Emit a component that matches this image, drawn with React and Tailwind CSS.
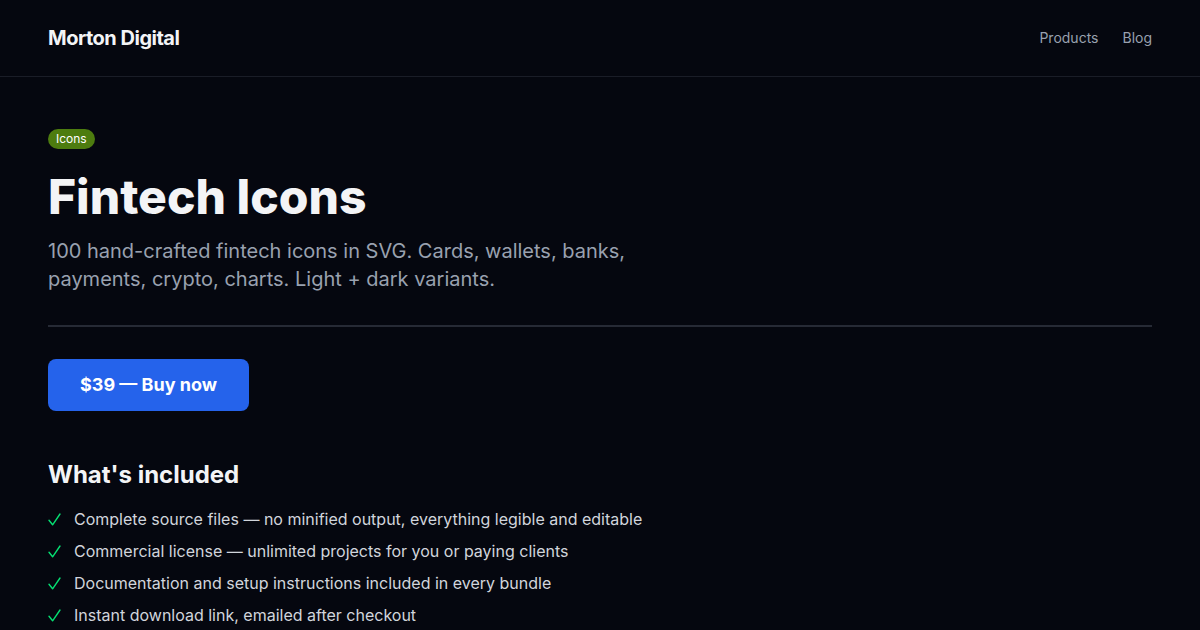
import React from 'react';

const items = [
    'Complete source files — no minified output, everything legible and editable',
    'Commercial license — unlimited projects for you or paying clients',
    'Documentation and setup instructions included in every bundle',
    'Instant download link, emailed after checkout',
];

const Check = () => (
    <svg className="w-[13px] h-[13px] text-green-400" viewBox="0 0 13 13" fill="none" stroke="currentColor" strokeWidth="1.4" strokeLinecap="round" strokeLinejoin="round">
        <path d="M1 7.2L4.6 11.8L12 1" />
    </svg>
);

const App = () => {
    return (
        <div className="min-h-screen bg-[#05070f] text-gray-100 font-['Inter','Liberation_Sans',sans-serif]">
            <header className="border-b border-[#1a1d27]">
                <div className="h-[76px] px-12 flex items-center justify-between">
                    <a className="text-xl font-bold tracking-tight text-gray-100">Morton Digital</a>
                    <nav className="flex items-center gap-6 text-sm text-gray-400">
                        <a>Products</a>
                        <a>Blog</a>
                    </nav>
                </div>
            </header>

            <main className="px-12 pt-12">
                <span className="inline-block rounded-full bg-[#4d7c0f] px-2 py-0.5 text-xs leading-4 text-white">Icons</span>
                <h1 className="mt-6 text-5xl leading-none font-extrabold text-gray-100">Fintech Icons</h1>
                <p className="mt-4 max-w-[600px] text-xl leading-7 text-gray-400">
                    100 hand-crafted fintech icons in SVG. Cards, wallets, banks, payments, crypto, charts. Light + dark variants.
                </p>

                <div className="mt-8 border-t-2 border-[#262a35]"></div>

                <button className="mt-8 rounded-lg bg-[#2563eb] px-8 py-3 text-lg leading-7 font-bold text-white">
                    $39 — Buy now
                </button>

                <h2 className="mt-12 text-2xl leading-8 font-bold text-gray-100">What's included</h2>
                <ul className="mt-4 space-y-2">
                    {items.map(item => (
                        <li key={item} className="flex items-center text-base leading-6 text-gray-300">
                            <span className="w-[26px] flex items-center"><Check /></span>
                            {item}
                        </li>
                    ))}
                </ul>
            </main>
        </div>
    );
};

export default App;
